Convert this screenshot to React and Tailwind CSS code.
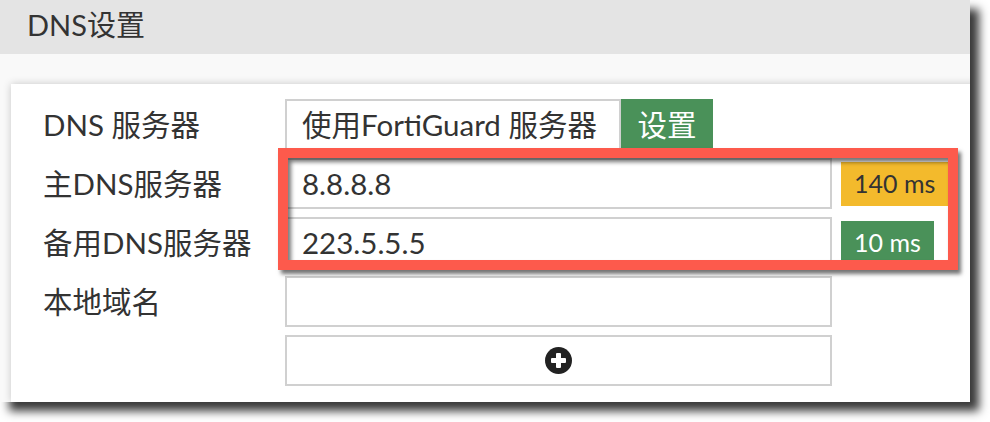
import React from "react";

const font = { fontFamily: 'Lato, "Noto Sans CJK SC", sans-serif' };

function PlusCircle() {
  return (
    <svg width="27" height="27" viewBox="0 0 27 27">
      <circle cx="13.5" cy="13.5" r="13.5" fill="#222" />
      <rect x="11" y="6" width="5" height="15" rx="1" fill="#fff" />
      <rect x="6" y="11" width="15" height="5" rx="1" fill="#fff" />
    </svg>
  );
}

export default function App() {
  return (
    <div className="w-[990px] h-[422px] bg-white overflow-hidden text-[#333]" style={font}>
      <div className="w-[970px] h-[402px] bg-[#f9f9f9] shadow-[9px_9px_9px_rgba(0,0,0,0.78)] flex flex-col overflow-hidden">
        <div className="h-[54px] shrink-0 bg-[#e4e4e4] pl-[27px] pb-[5px] flex items-center text-[29px] leading-none">
          DNS设置
        </div>
        <div className="flex-1 pt-[30px] pl-[11px]">
          <div className="relative bg-white w-[980px] h-full shadow-[0_0_8px_rgba(0,0,0,0.2)] pl-[32px] pt-[15px] flex flex-col gap-[8px] text-[29.5px] leading-none">
            <div className="flex items-center h-[51px]">
              <div className="w-[242px] whitespace-nowrap">DNS 服务器</div>
              <div className="w-[336px] h-[51px] border-2 border-[#d0d0d0] flex items-center pl-[15px] whitespace-nowrap">使用FortiGuard 服务器</div>
              <div className="w-[92px] h-[51px] bg-[#4a9159] text-white flex items-center justify-center">设置</div>
            </div>
            <div className="flex items-center h-[51px]">
              <div className="w-[242px] whitespace-nowrap">主DNS服务器</div>
              <div className="w-[547px] h-[51px] border-2 border-[#d0d0d0] flex items-center pl-[15px]">8.8.8.8</div>
              <div className="ml-[9px] h-[44px] px-[13px] bg-[#f3ba2c] text-[#333] text-[25px] flex items-center">140 ms</div>
            </div>
            <div className="flex items-center h-[51px]">
              <div className="w-[242px] whitespace-nowrap">备用DNS服务器</div>
              <div className="w-[547px] h-[51px] border-2 border-[#d0d0d0] flex items-center pl-[15px]">223.5.5.5</div>
              <div className="ml-[9px] h-[44px] px-[13px] bg-[#4a9159] text-white text-[25px] flex items-center">10 ms</div>
            </div>
            <div className="flex items-center h-[51px]">
              <div className="w-[242px] whitespace-nowrap">本地域名</div>
              <div className="w-[547px] h-[51px] border-2 border-[#d0d0d0]"></div>
            </div>
            <div className="flex items-center h-[51px]">
              <div className="w-[242px]"></div>
              <div className="w-[547px] h-[51px] border-2 border-[#d0d0d0] flex items-center justify-center">
                <PlusCircle />
              </div>
            </div>
            <div className="absolute left-[267px] top-[64px] w-[680px] h-[122px] border-[10px] border-[#fd5a4c] shadow-[3px_4px_4px_rgba(0,0,0,0.55),inset_3px_4px_4px_rgba(0,0,0,0.55)]"></div>
          </div>
        </div>
      </div>
    </div>
  );
}
